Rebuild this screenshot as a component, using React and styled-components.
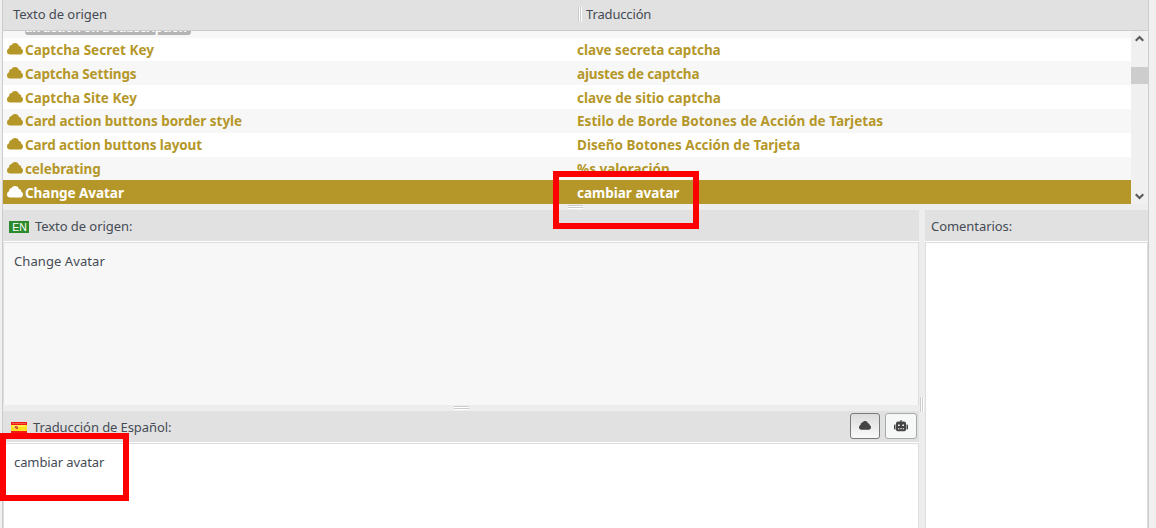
import styled, { createGlobalStyle } from "styled-components";

const colors = {
    gold: "#b59729",
    bar: "#e1e1e1",
    split: "#ededed",
    line: "#ccc",
    text: "#454b54",
}

const GlobalStyle = createGlobalStyle`
    * {
        box-sizing: border-box;
    }
    body {
        margin: 0;
        background: #f0f0f0;
        overflow: hidden;
        font-family: "Noto Sans", "Open Sans", sans-serif;
        font-size: 13px;
        color: ${colors.text};
    }
`
const Page = styled.div`
    position: relative;
    width: 1156px;
    height: 528px;
    padding: 0 7px 0 2px;
    overflow: hidden;
`
const Editor = styled.div`
    height: 528px;
    border: solid ${colors.line};
    border-width: 0 1px;
    display: flex;
    flex-direction: column;
`
const TableHead = styled.div`
    flex: 0 0 31px;
    display: flex;
    align-items: center;
    background: ${colors.bar};
    border-bottom: 1px solid ${colors.line};
    padding: 0 0 2px 10px;
`
const SourceHead = styled.div`
    width: 565px;
`
const TargetHead = styled.div`
    display: flex;
    align-items: center;
    gap: 4px;
`
const ColumnGrip = styled.i`
    width: 4px;
    height: 15px;
    background: linear-gradient(90deg, #ccc 1px, #fff 1px 2px, #ccc 2px 3px, #fff 3px);
`
const Text = styled.span`
    white-space: nowrap;
    line-height: 20px;
    letter-spacing: ${({ $spacing }) => $spacing || 0}px;
`
const List = styled.div`
    flex: 0 0 173px;
    display: flex;
`
const Rows = styled.div`
    flex: 1;
    overflow: hidden;
`
const ClippedRow = styled.div`
    height: 7px;
    padding-left: 22px;
    display: flex;
    align-items: flex-end;
    overflow: hidden;
    background: #f7f7f7;
`
const Placeholder = styled.span`
    height: 20px;
    width: 166px;
    margin-bottom: 3px;
    border-radius: 3px;
    background: #b4b4b4;
    color: #fff;
    font-size: 12.6px;
    font-weight: 700;
    letter-spacing: -0.3px;
    line-height: 25px;
    white-space: nowrap;
`
const Row = styled.div`
    height: ${({ $height }) => $height}px;
    display: flex;
    align-items: flex-start;
    padding: ${({ $top }) => $top}px 0 0 4px;
    font-size: 13.5px;
    font-weight: 700;
    background: ${({ $striped, $selected }) => $selected ? colors.gold : $striped ? "#f7f7f7" : "#fff"};
    color: ${({ $selected }) => $selected ? "#fff" : colors.gold};
`
const SourceCell = styled.div`
    width: 570px;
    display: flex;
    gap: 2px;
`
const CloudSvg = styled.svg`
    width: ${({ $width }) => $width}px;
    height: ${({ $height }) => $height}px;
    margin-top: ${({ $top }) => $top || 0}px;
    fill: currentColor;
`
const RobotSvg = styled.svg`
    width: 14px;
    height: 12px;
    fill: currentColor;
`
const Scrollbar = styled.div`
    width: 17px;
    display: flex;
    flex-direction: column;
    align-items: center;
    background: #f0f0f0;
`
const Thumb = styled.div`
    width: 17px;
    height: 17px;
    margin: 25px 0 auto;
    background: #cdcdcd;
`
const Arrow = styled.svg`
    width: 9px;
    height: 7px;
    margin: ${({ $down }) => $down ? "0 0 4px" : "4px 0 0"};
    fill: none;
    stroke: #5a5a5a;
    stroke-width: 2.2;
`
const RowSplit = styled.div`
    flex: 0 0 6px;
    display: flex;
    justify-content: center;
    align-items: flex-start;
    padding-top: 1px;
    background: ${colors.split};
`
const RowGrip = styled.i`
    width: 15px;
    height: 4px;
    background: linear-gradient(#ccc 1px, #fff 1px 2px, #ccc 2px 3px, #fff 3px);
`
const Bottom = styled.div`
    flex: 1;
    display: flex;
    min-height: 0;
`
const Left = styled.div`
    width: 916px;
    display: flex;
    flex-direction: column;
`
const ColumnSplit = styled.div`
    width: 6px;
    display: flex;
    justify-content: flex-start;
    align-items: flex-start;
    padding: 187px 0 0 1px;
    background: ${colors.split};
`
const Right = styled.div`
    flex: 1;
    display: flex;
    flex-direction: column;
`
const Bar = styled.div`
    flex: 0 0 32px;
    display: flex;
    align-items: center;
    gap: 6px;
    padding: 0 2px 0 6px;
    background: ${colors.bar};
    border-bottom: 1px solid #fff;
`
const Lang = styled.span`
    width: 20px;
    height: 12px;
    margin-top: 2px;
    padding-left: 1px;
    background: #2b8a2b;
    color: #fff;
    font: 10.5px/12px "Liberation Sans", sans-serif;
    text-align: center;
`
const Flag = styled.svg`
    width: 16px;
    height: 11px;
    margin: 2px 0 0 2px;
`
const Area = styled.div`
    flex: ${({ $height }) => $height ? `0 0 ${$height}px` : 1};
    border: 1px solid #ddd;
    border-bottom: 0;
    background: ${({ $readonly }) => $readonly ? "#f7f7f7" : "#fff"};
    padding: 8px 10px;
`
const Buttons = styled.div`
    display: flex;
    gap: 5px;
    margin: -1px 0 0 auto;
`
const Button = styled.button`
    width: ${({ $active }) => $active ? 30 : 32}px;
    height: 26px;
    display: flex;
    align-items: center;
    justify-content: center;
    padding: 0 0 1px;
    border: 1px solid ${({ $active }) => $active ? "#7a7a7a" : "#a7aaaa"};
    border-radius: 3px;
    background: ${({ $active }) => $active ? "linear-gradient(#dcdcdc, #fafafa)" : "#f6f8f8"};
    color: #444;
`
const Mark = styled.div`
    position: absolute;
    left: ${({ $left }) => $left}px;
    top: ${({ $top }) => $top}px;
    width: ${({ $width }) => $width}px;
    height: ${({ $height }) => $height}px;
    border: 6px solid #f00;
`

const strings = [
    { source: "Captcha Secret Key", target: "clave secreta captcha", height: 23, top: 2, spacing: [0.02, -0.05] },
    { source: "Captcha Settings", target: "ajustes de captcha", height: 24, top: 3, spacing: [-0.15, -0.16] },
    { source: "Captcha Site Key", target: "clave de sitio captcha", height: 24, top: 3, spacing: [0, -0.03] },
    { source: "Card action buttons border style", target: "Estilo de Borde Botones de Acción de Tarjetas", height: 24, top: 2, spacing: [-0.03, 0.04] },
    { source: "Card action buttons layout", target: "Diseño Botones Acción de Tarjeta", height: 24, top: 2, spacing: [-0.1, 0] },
    { source: "celebrating", target: "%s valoración", height: 23, top: 2, spacing: [-0.1, 0] },
    { source: "Change Avatar", target: "cambiar avatar", height: 24, top: 3, spacing: [-0.05, 0], selected: true },
]

const Cloud = ({ width = 16, height = 12, top }) => (
    <CloudSvg $width={width} $height={height} $top={top} viewBox="0 0 16 12" preserveAspectRatio="none">
        <path d="M3.2 11.5C1.2 11.5 0 10.2 0 8.4 0 6.9.8 5.7 2.1 5.2 2 3.5 3 2.1 4.6 2 5.3.7 6.5 0 8 0c2 0 3.6 1.2 3.9 3 1.4.1 2.4 1.1 2.4 2.7 1.1.4 1.7 1.4 1.7 2.7 0 1.9-1.2 3.1-3 3.1z" />
    </CloudSvg>
)

const Robot = () => (
    <RobotSvg viewBox="0 0 14 12">
        <path fillRule="evenodd" d="M6.4 0h1.2v1.6H10a2 2 0 0 1 2 2v6a1.6 1.6 0 0 1-1.6 1.6H3.6A1.6 1.6 0 0 1 2 9.6v-6a2 2 0 0 1 2-2h2.4zM4 4.6v1.3h1.7V4.6zm4.3 0v1.3H10V4.6zM4 8.3v.9h1.3v-.9zm2.3 0v.9h1.4v-.9zm2.4 0v.9H10v-.9zM0 5.4c0-.5.4-.8.8-.8h.7v5H.8c-.5 0-.8-.4-.8-.8zm12.5-.8h.7c.5 0 .8.4.8.8v3.4c0 .5-.4.8-.8.8h-.7z" />
    </RobotSvg>
)

const SpanishFlag = () => (
    <Flag viewBox="0 0 16 11">
        <rect width="16" height="11" fill="#f01c12" />
        <rect y="1" x="1" width="14" height="1" fill="#f4594a" />
        <rect y="3" width="16" height="6" fill="#ffe21f" />
        <rect y="3" x="1" width="14" height="2" fill="#fff04a" />
        <path d="M4 4h2v1h1v2H5V6H4z" fill="#d8503a" />
        <path d="M3 5h1v2H3zM6 4h1v1H6z" fill="#e8a878" />
    </Flag>
)

const App = () => {
    return (
        <Page>
            <GlobalStyle />
            <Editor>
                <TableHead>
                    <SourceHead><Text $spacing={-0.06}>Texto de origen</Text></SourceHead>
                    <TargetHead><ColumnGrip /><Text $spacing={-0.15}>Traducción</Text></TargetHead>
                </TableHead>
                <List>
                    <Rows>
                        <ClippedRow><Placeholder>an action on a subscription</Placeholder></ClippedRow>
                        {strings.map((item, i) => (
                            <Row key={item.source} $height={item.height} $top={item.top} $striped={i % 2 === 1} $selected={item.selected}>
                                <SourceCell><Cloud top={3} /><Text $spacing={item.spacing[0]}>{item.source}</Text></SourceCell>
                                <Text $spacing={item.spacing[1]}>{item.target}</Text>
                            </Row>
                        ))}
                    </Rows>
                    <Scrollbar>
                        <Arrow viewBox="0 0 9 7"><path d="M.7 5.8 4.5 2l3.8 3.8" /></Arrow>
                        <Thumb />
                        <Arrow $down viewBox="0 0 9 7"><path d="M.7 1.2 4.5 5l3.8-3.8" /></Arrow>
                    </Scrollbar>
                </List>
                <RowSplit><RowGrip /></RowSplit>
                <Bottom>
                    <Left>
                        <Bar><Lang>EN</Lang><Text $spacing={-0.06}>Texto de origen:</Text></Bar>
                        <Area $height={163} $readonly><Text $spacing={0.08}>Change Avatar</Text></Area>
                        <RowSplit><RowGrip /></RowSplit>
                        <Bar>
                            <SpanishFlag />
                            <Text $spacing={-0.09}>Traducción de Español:</Text>
                            <Buttons>
                                <Button $active><Cloud width={12} height={9} /></Button>
                                <Button><Robot /></Button>
                            </Buttons>
                        </Bar>
                        <Area><Text $spacing={-0.1}>cambiar avatar</Text></Area>
                    </Left>
                    <ColumnSplit><ColumnGrip /></ColumnSplit>
                    <Right>
                        <Bar><Text $spacing={-0.06}>Comentarios:</Text></Bar>
                        <Area />
                    </Right>
                </Bottom>
            </Editor>
            <Mark $left={553} $top={171} $width={146} $height={58} />
            <Mark $left={0} $top={433} $width={129} $height={68} />
        </Page>
    )
}

export default App;
